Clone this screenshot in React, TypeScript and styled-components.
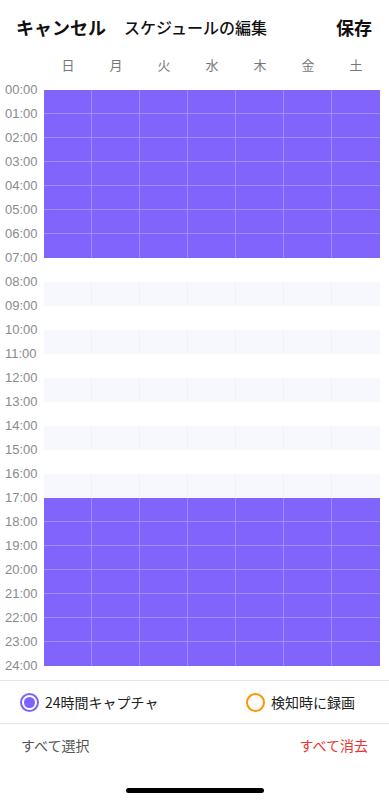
import React, { useState } from "react";
import styled, { createGlobalStyle } from "styled-components";

const GlobalStyle = createGlobalStyle`
  html, body {
    margin: 0;
    padding: 0;
    background: #ffffff;
  }
  body {
    font-family: "Noto Sans CJK JP", "Noto Sans", sans-serif;
    -webkit-font-smoothing: antialiased;
  }
`;

const Screen = styled.div`
  width: 389px;
  height: 800px;
  display: flex;
  flex-direction: column;
  background: #fff;
  overflow: hidden;
`;

const Header = styled.header`
  height: 54px;
  display: flex;
  align-items: center;
  padding: 0 17px 0 16px;
  box-sizing: border-box;
`;

const HeaderButton = styled.span`
  font-size: 18px;
  font-weight: 700;
  color: #111;
`;

const Title = styled.span`
  flex: 1;
  margin-left: 18px;
  font-size: 16px;
  font-weight: 500;
  color: #111;
`;

const DayRow = styled.div`
  display: grid;
  grid-template-columns: repeat(7, 48px);
  margin-left: 44px;
  height: 20px;
  align-items: center;
`;

const DayLabel = styled.span`
  text-align: center;
  font-size: 13px;
  color: #777;
`;

const Body = styled.div`
  display: flex;
  margin-top: 16px;
`;

const TimeCol = styled.div`
  width: 44px;
  height: 576px;
  display: flex;
  flex-direction: column;
`;

const TimeLabel = styled.span`
  flex: none;
  height: 24px;
  line-height: 24px;
  font-family: "Liberation Sans", Arial, sans-serif;
  font-size: 13px;
  color: #8a8a8e;
  padding-left: 5px;
  &:first-child {
    margin-top: -12px;
  }
`;

const Grid = styled.div`
  display: grid;
  grid-template-columns: repeat(7, 48px);
  grid-auto-rows: 24px;
  width: 336px;
`;

const Cell = styled.div<{ $on: boolean; $shade: boolean; $last: boolean; $bottom: boolean }>`
  box-sizing: border-box;
  background: ${(p) => (p.$on ? "#8064fc" : p.$shade ? "#f7f8fd" : "#ffffff")};
  border-right: 1px solid
    ${(p) => (p.$last ? "transparent" : p.$on ? "#a08cff" : p.$shade ? "#f0f1f8" : "transparent")};
  border-bottom: 1px solid
    ${(p) => (p.$on && !p.$bottom ? "#a08cff" : "transparent")};
`;

const Options = styled.div`
  margin-top: 14px;
  border-top: 1px solid #e6e6e6;
  border-bottom: 1px solid #e6e6e6;
  height: 42px;
  display: flex;
  align-items: center;
  justify-content: space-between;
  padding: 0 34px 0 20px;
`;

const Option = styled.label`
  display: flex;
  align-items: center;
  gap: 6px;
  font-size: 14px;
  color: #222;
`;

const Radio = styled.span<{ $color: string; $checked: boolean }>`
  width: 19px;
  height: 19px;
  box-sizing: border-box;
  border-radius: 50%;
  border: 2px solid ${(p) => p.$color};
  display: flex;
  align-items: center;
  justify-content: center;
  &::after {
    content: "";
    width: 11px;
    height: 11px;
    border-radius: 50%;
    background: ${(p) => (p.$checked ? p.$color : "transparent")};
  }
`;

const Actions = styled.div`
  height: 42px;
  display: flex;
  align-items: center;
  justify-content: space-between;
  padding: 0 21px;
`;

const Action = styled.span<{ $danger?: boolean }>`
  font-size: 14px;
  color: ${(p) => (p.$danger ? "#e8362f" : "#555")};
`;

const HomeBar = styled.div`
  margin: 22px auto 0;
  width: 138px;
  height: 5px;
  border-radius: 3px;
  background: #000;
`;

const days = ["日", "月", "火", "水", "木", "金", "土"];

const isOn = (h: number) => h < 7 || h >= 17;

export default function App() {
  const [mode, setMode] = useState<"always" | "detect">("always");
  const hours = Array.from({ length: 24 }, (_, i) => i);

  return (
    <Screen>
      <GlobalStyle />
      <Header>
        <HeaderButton>キャンセル</HeaderButton>
        <Title>スケジュールの編集</Title>
        <HeaderButton>保存</HeaderButton>
      </Header>
      <DayRow>
        {days.map((d) => (
          <DayLabel key={d}>{d}</DayLabel>
        ))}
      </DayRow>
      <Body>
        <TimeCol>
          {Array.from({ length: 25 }, (_, i) => (
            <TimeLabel key={i}>{String(i).padStart(2, "0")}:00</TimeLabel>
          ))}
        </TimeCol>
        <Grid>
          {hours.map((h) =>
            days.map((d, c) => (
              <Cell
                key={`${h}-${c}`}
                $on={isOn(h)}
                $shade={h % 2 === 0}
                $last={c === 6}
                $bottom={h === 6 || h === 23}
              />
            ))
          )}
        </Grid>
      </Body>
      <Options>
        <Option onClick={() => setMode("always")}>
          <Radio $color="#7b61ff" $checked={mode === "always"} />
          24時間キャプチャ
        </Option>
        <Option onClick={() => setMode("detect")}>
          <Radio $color="#ff9500" $checked={mode === "detect"} />
          検知時に録画
        </Option>
      </Options>
      <Actions>
        <Action>すべて選択</Action>
        <Action $danger>すべて消去</Action>
      </Actions>
      <HomeBar />
    </Screen>
  );
}
